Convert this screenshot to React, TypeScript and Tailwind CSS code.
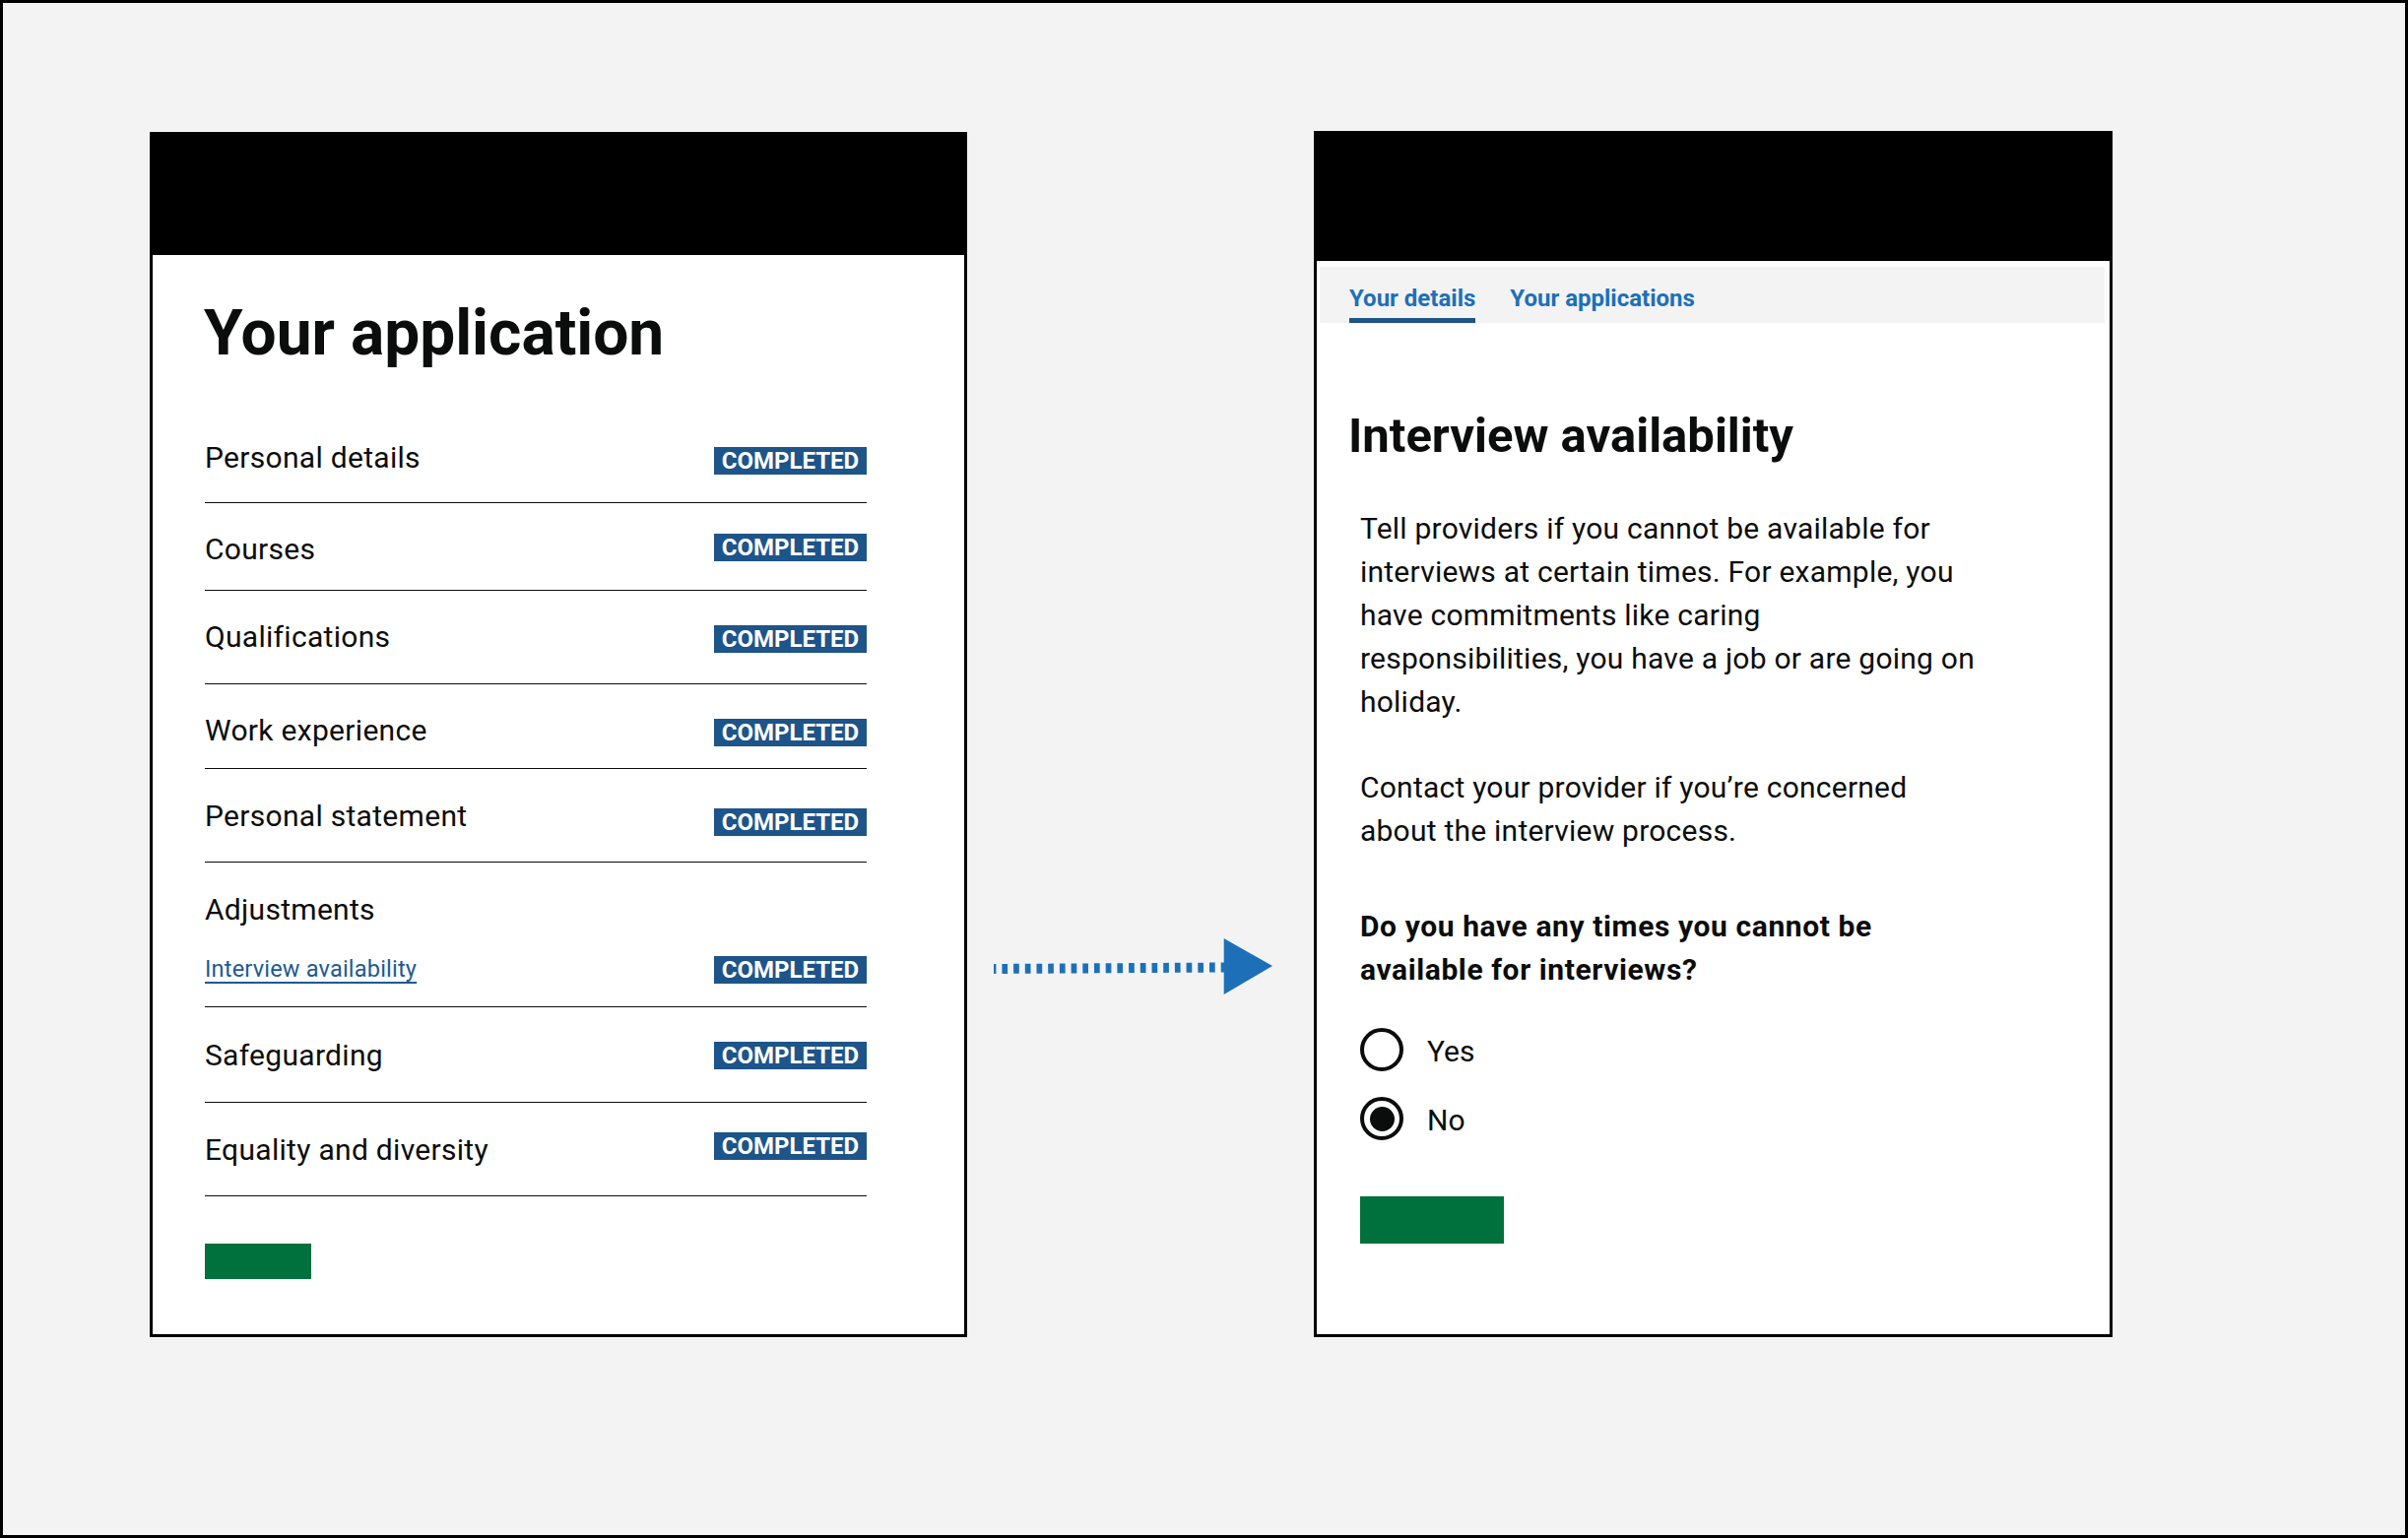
const font = { fontFamily: "Roboto, 'Liberation Sans', sans-serif" };

const rows = [
  { label: "Personal details", h: "h-[111px]", textMt: "mt-[50px]", tagMt: "mt-[54px]" },
  { label: "Courses", h: "h-[89px]", textMt: "mt-[32px]", tagMt: "mt-[31px]" },
  { label: "Qualifications", h: "h-[95px]", textMt: "mt-[32px]", tagMt: "mt-[35px]" },
  { label: "Work experience", h: "h-[86px]", textMt: "mt-[32px]", tagMt: "mt-[35px]" },
  { label: "Personal statement", h: "h-[95px]", textMt: "mt-[33px]", tagMt: "mt-[40px]" },
];

const rowsAfter = [
  { label: "Safeguarding", h: "h-[97px]", textMt: "mt-[34px]", tagMt: "mt-[35px]" },
  { label: "Equality and diversity", h: "h-[95px]", textMt: "mt-[33px]", tagMt: "mt-[30px]" },
];

function Tag({ className = "" }: { className?: string }) {
  return (
    <span
      className={`flex h-[28px] w-[155px] items-center justify-center bg-[#1d5489] text-[24px] font-bold leading-none text-white ${className}`}
    >
      COMPLETED
    </span>
  );
}

function TaskRow({ label, h, textMt, tagMt }: { label: string; h: string; textMt: string; tagMt: string }) {
  return (
    <div className={`flex items-start justify-between border-b border-[#0b0c0c] ${h}`}>
      <span className={`text-[30px] leading-none tracking-[0.3px] text-[#0b0c0c] ${textMt}`}>{label}</span>
      <Tag className={tagMt} />
    </div>
  );
}

function ApplicationPanel() {
  return (
    <div className="flex h-[1224px] w-[830px] shrink-0 flex-col border-[3px] border-black bg-white">
      <div className="h-[122px] bg-black" />
      <div className="flex flex-col pl-[53px]">
        <h1 className="-ml-px mt-[48px] text-[64px] font-bold leading-none text-[#0b0c0c]">
          Your application
        </h1>
        <div className="mt-[29px] flex w-[672px] flex-col">
          {rows.map((r) => (
            <TaskRow key={r.label} {...r} />
          ))}
          {/* Adjustments has a sub-item */}
          <div className="h-[147px] border-b border-[#0b0c0c]">
            <div className="mt-[33px] text-[30px] leading-none tracking-[0.3px] text-[#0b0c0c]">Adjustments</div>
            <div className="mt-[33px] flex items-start justify-between">
              <a className="mt-[1px] text-[23.5px] leading-none tracking-[0.2px] text-[#1d5a92] underline decoration-2 underline-offset-[5px]">
                Interview availability
              </a>
              <Tag className="-mt-[1px]" />
            </div>
          </div>
          {rowsAfter.map((r) => (
            <TaskRow key={r.label} {...r} />
          ))}
        </div>
        <div className="mt-[48px] h-[36px] w-[108px] bg-[#00703c]" />
      </div>
    </div>
  );
}

function Arrow() {
  return (
    <div className="w-[352px] shrink-0 pl-[27px] pt-[819px]">
      <svg width="284" height="58" viewBox="0 0 284 58">
        <line
          x1="0"
          y1="31"
          x2="234"
          y2="29.5"
          stroke="#1d70b8"
          strokeWidth="10"
          strokeDasharray="5.7 6"
          strokeDashoffset="3.3"
        />
        <polygon points="233.7,0 283,28 233.7,57" fill="#1d70b8" />
      </svg>
    </div>
  );
}

function Radio({ label, checked }: { label: string; checked?: boolean }) {
  return (
    <div className="flex items-center gap-[24px]">
      <span className="flex h-[44px] w-[44px] items-center justify-center rounded-full border-[4px] border-[#0b0c0c] bg-white">
        {checked && <span className="h-[25px] w-[25px] rounded-full bg-[#0b0c0c]" />}
      </span>
      <span className="mt-[4px] text-[30px] leading-none text-[#0b0c0c]">{label}</span>
    </div>
  );
}

function AvailabilityPanel() {
  return (
    <div className="-mt-px flex h-[1225px] w-[811px] shrink-0 flex-col border-[3px] border-black bg-white">
      <div className="h-[129px] bg-black" />
      <nav className="ml-[3px] mr-[5px] mt-[6px] flex h-[57px] items-end gap-[35px] bg-[#f3f3f3] pl-[30px]">
        <span className="flex h-full flex-col justify-end">
          <span className="text-[24px] font-bold leading-none text-[#1d70b8]">Your details</span>
          <span className="mt-[8px] h-[5px] bg-[#1d5489]" />
        </span>
        <span className="mb-[13px] text-[24px] font-bold leading-none text-[#1d70b8]">Your applications</span>
      </nav>
      <div className="flex flex-col pl-[32px]">
        <h2 className="mt-[90px] text-[49px] font-bold leading-none text-[#0b0c0c]">Interview availability</h2>
        <div className="ml-[12px] flex flex-col text-[30px] leading-[44px] tracking-[0.23px] text-[#0b0c0c]">
          <p className="mt-[48px]">
            Tell providers if you cannot be available for
            <br />
            interviews at certain times. For example, you
            <br />
            have commitments like caring
            <br />
            responsibilities, you have a job or are going on
            <br />
            holiday.
          </p>
          <p className="mt-[43px]">
            Contact your provider if you’re concerned
            <br />
            about the interview process.
          </p>
          <p className="mt-[53px] font-bold tracking-[0.6px]">
            Do you have any times you cannot be
            <br />
            available for interviews?
          </p>
          <div className="mt-[37px] flex flex-col gap-[26px] tracking-normal">
            <Radio label="Yes" />
            <Radio label="No" checked />
          </div>
          <div className="mt-[57px] h-[48px] w-[146px] bg-[#00703c]" />
        </div>
      </div>
    </div>
  );
}

export default function App() {
  return (
    <div
      className="flex h-[1562px] w-[2445px] items-start border-[3px] border-black bg-[#f3f3f3] pl-[149px] pt-[131px]"
      style={font}
    >
      <ApplicationPanel />
      <Arrow />
      <AvailabilityPanel />
    </div>
  );
}
